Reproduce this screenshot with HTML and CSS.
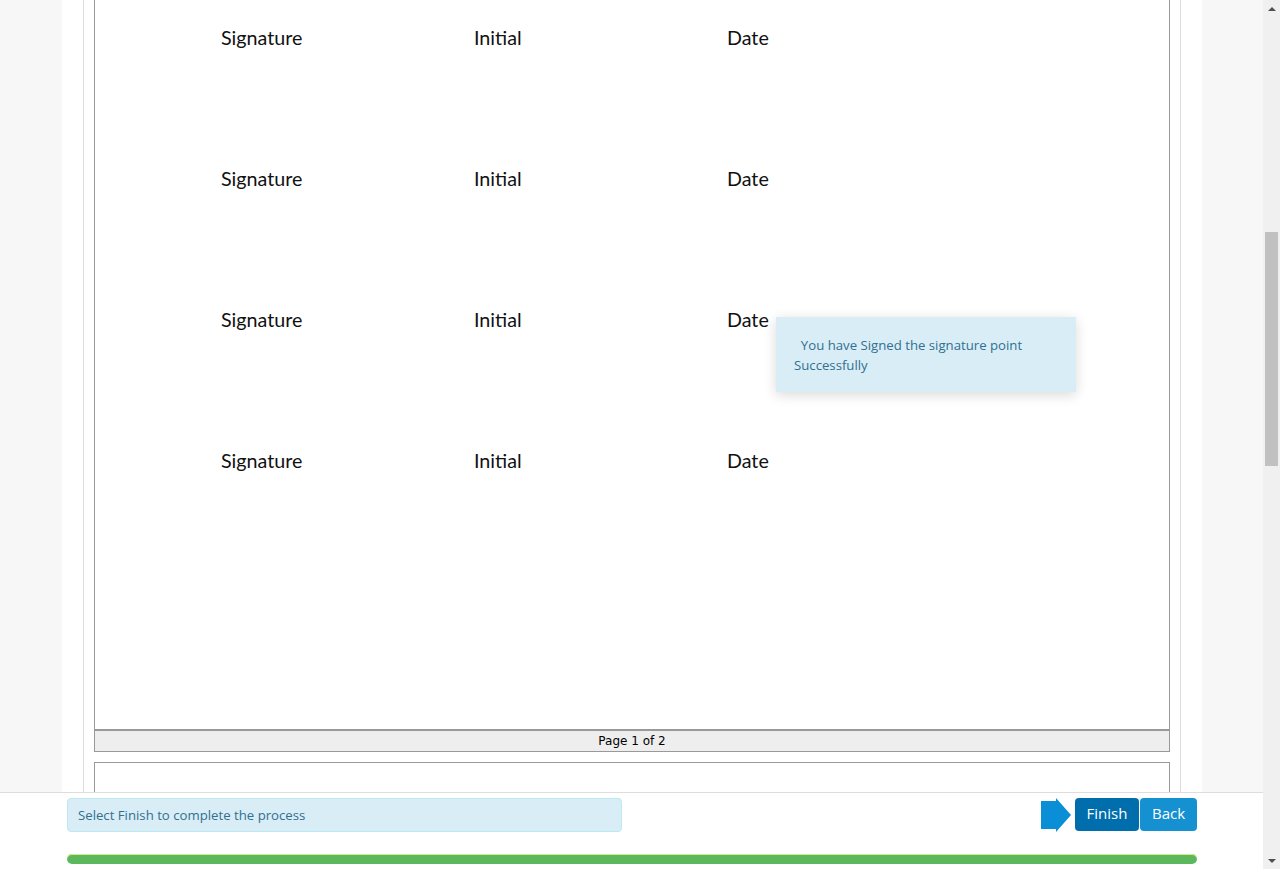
FILE: index.html
```html
<!DOCTYPE html>
<html>
<head>
<meta charset="utf-8">
<link rel="stylesheet" href="styles.css">
</head>
<body>
<div class="app">
  <div class="main">
    <div class="viewport">
      <div class="container">
        <div class="panel">
          <div class="doc">
            <div class="sig-row"><span>Signature</span><span>Initial</span><span>Date</span></div>
            <div class="sig-row"><span>Signature</span><span>Initial</span><span>Date</span></div>
            <div class="sig-row"><span>Signature</span><span>Initial</span><span>Date</span></div>
            <div class="sig-row"><span>Signature</span><span>Initial</span><span>Date</span></div>
            <div class="toast">&nbsp;&nbsp;You have Signed the signature point Successfully</div>
          </div>
          <div class="page-footer">Page 1 of 2</div>
          <div class="doc next"></div>
        </div>
      </div>
    </div>
    <div class="bottom-bar">
      <div class="bar-inner">
        <div class="actions">
          <div class="alert">Select Finish to complete the process</div>
          <svg class="arrow" width="30" height="34" viewBox="0 0 30 34"><path d="M0 3h15V0l15 17-15 17v-3H0z" fill="#0a8fd6"/></svg>
          <div class="btns">
            <button class="btn finish">Finish</button>
            <button class="btn back">Back</button>
          </div>
        </div>
        <div class="progress"></div>
      </div>
    </div>
  </div>
  <div class="scrollbar">
    <div class="sb-arrow up"></div>
    <div class="sb-track"><div class="sb-thumb"></div></div>
    <div class="sb-arrow down"></div>
  </div>
</div>
</body>
</html>
```
FILE: styles.css
```css
html, body {
  margin: 0;
  padding: 0;
  height: 869px;
  overflow: hidden;
}
body {
  font-family: "Open Sans", sans-serif;
  background: #f7f7f7;
}
.app {
  display: flex;
  height: 869px;
}
.main {
  width: 1263px;
  display: flex;
  flex-direction: column;
}
.viewport {
  height: 792px;
  overflow: hidden;
  background: #f7f7f7;
}
.container {
  width: 1140px;
  margin-left: 62px;
  background: #fff;
  height: 100%;
  padding: 0 21px;
  box-sizing: border-box;
}
.panel {
  border-left: 1px solid #ddd;
  border-right: 1px solid #ddd;
  height: 100%;
  padding: 0 10px;
  box-sizing: border-box;
}
.doc {
  position: relative;
  border: 1px solid #999;
  border-top: 0;
  border-bottom: 0;
  height: 729px;
  padding: 26px 0 0 126px;
  box-sizing: border-box;
  background: #fff;
}
.sig-row {
  display: grid;
  grid-template-columns: 253px 253px 253px;
  height: 141px;
  font-family: "Lato", sans-serif;
  font-size: 19.7px;
  line-height: 24px;
  color: #111;
}
.toast {
  position: absolute;
  left: 681px;
  top: 317px;
  width: 300px;
  height: 75px;
  padding: 18px 18px 0 18px;
  box-sizing: border-box;
  background: #d9edf7;
  color: #31708f;
  font-size: 13.2px;
  line-height: 20px;
  box-shadow: 0 3px 12px rgba(0,0,0,0.15);
}
.page-footer {
  height: 23px;
  border: 1px solid #999;
  border-top: 2px solid #999;
  background: #eee;
  box-sizing: border-box;
  text-align: center;
  font-family: "DejaVu Sans", sans-serif;
  font-size: 12px;
  line-height: 21px;
  color: #000;
}
.doc.next {
  margin-top: 10px;
  height: 100px;
  border-top: 1px solid #999;
  padding: 0;
}
.bottom-bar {
  height: 77px;
  background: #fff;
  border-top: 1px solid #ddd;
  box-sizing: border-box;
}
.bar-inner {
  width: 1130px;
  margin-left: 67px;
  padding-top: 5px;
}
.actions {
  display: flex;
  align-items: flex-start;
  height: 34px;
}
.actions > * {
  flex-shrink: 0;
}
.alert {
  width: 555px;
  height: 34px;
  box-sizing: border-box;
  background: #d9edf7;
  border: 1px solid #bce8f1;
  border-radius: 4px;
  color: #31708f;
  font-size: 13.2px;
  line-height: 32px;
  padding-left: 10px;
}
.arrow {
  margin-left: 419px;
  display: block;
}
.btns {
  display: flex;
  gap: 1px;
  margin-left: 4px;
}
.btn {
  height: 33px;
  border: 0;
  border-radius: 4px;
  color: #fff;
  font-family: "Open Sans", sans-serif;
  font-size: 15px;
  line-height: 30px;
  padding: 0 0 3px 0;
  cursor: pointer;
}
.finish {
  width: 64px;
  background: #006ead;
}
.back {
  width: 57px;
  background: #1590d0;
}
.progress {
  margin-top: 22px;
  height: 10px;
  border-radius: 5px;
  background: #5cb85c;
  box-shadow: inset 0 1px 0 #d6e98a;
}
.scrollbar {
  width: 17px;
  background: #f0f0f0;
  display: flex;
  flex-direction: column;
}
.sb-arrow {
  height: 17px;
  display: flex;
  align-items: center;
  justify-content: center;
}
.sb-arrow.up::before {
  content: "";
  border-left: 4px solid transparent;
  border-right: 4px solid transparent;
  border-bottom: 4px solid #505050;
}
.sb-arrow.down::before {
  content: "";
  border-left: 4px solid transparent;
  border-right: 4px solid transparent;
  border-top: 4px solid #505050;
}
.sb-track {
  flex: 1;
  padding-top: 215px;
}
.sb-thumb {
  margin-left: 2px;
  width: 13px;
  height: 234px;
  background: #c1c1c1;
}
```
